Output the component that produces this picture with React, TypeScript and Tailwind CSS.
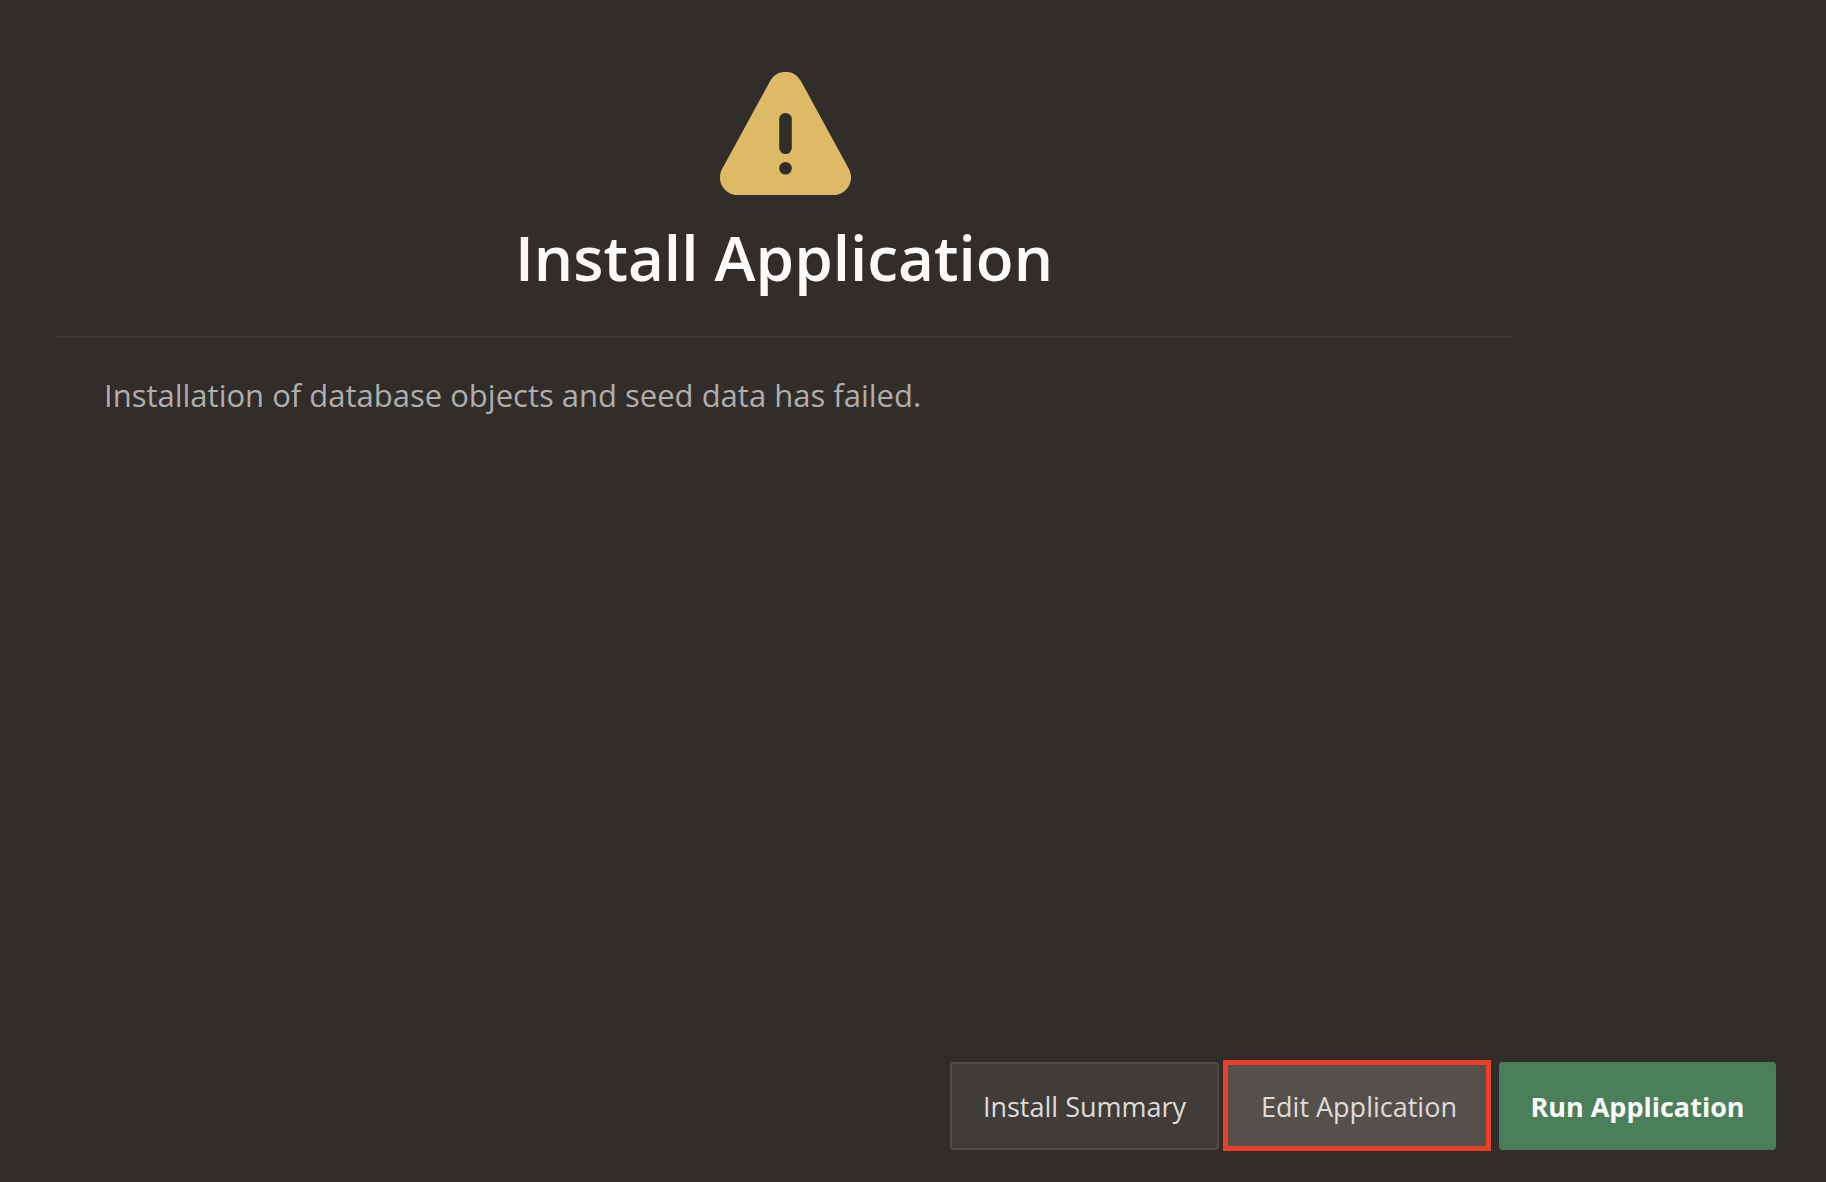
function WarningIcon() {
  return (
    <svg viewBox="0 0 131 123" className="ml-[3px] h-[123px] w-[131px]" aria-hidden="true">
      <path
        fill="#deb966"
        d="M50.1 9.1A17.5 17.5 0 0 1 80.9 9.1L128.9 97.1A17.5 17.5 0 0 1 113.5 123H17.5A17.5 17.5 0 0 1 2.1 97.1Z"
      />
      <rect x="59.2" y="41" width="12.6" height="41" rx="6.3" fill="#312d2a" />
      <circle cx="65.5" cy="96.2" r="6.3" fill="#312d2a" />
    </svg>
  );
}

export default function App() {
  return (
    <main className="flex min-h-screen flex-col justify-between bg-[#312d2a] font-['Open_Sans',sans-serif]">
      <section className="mr-[314px] ml-14 pt-[72px]">
        <header className="flex flex-col items-center border-b-2 border-[#3d3936] pb-[39px]">
          <WarningIcon />
          <h1 className="mt-[22px] text-[62px] leading-[80px] font-semibold text-[#fcfbfa]">Install Application</h1>
        </header>
        <p className="px-12 pt-[35px] text-[31px] leading-[44px] text-[#b0aeac]">
          Installation of database objects and seed data has failed.
        </p>
      </section>
      <footer className="flex items-center justify-end pr-[50px] pb-[31px] text-[27px] text-[#dddcda]">
        <button
          type="button"
          className="mr-1 h-[88px] w-[269px] rounded-[4px] border-2 border-[#514d49] bg-[#403c38] pt-1"
        >
          Install Summary
        </button>
        <button type="button" className="mr-2 h-[91px] w-[268px] border-5 border-[#ea4025] bg-[#56504c] pt-1 pl-1">
          Edit Application
        </button>
        <button type="button" className="h-[88px] w-[277px] rounded-[4px] bg-[#4a7f5a] pt-1 font-bold text-[#fcfbfa]">
          Run Application
        </button>
      </footer>
    </main>
  );
}
